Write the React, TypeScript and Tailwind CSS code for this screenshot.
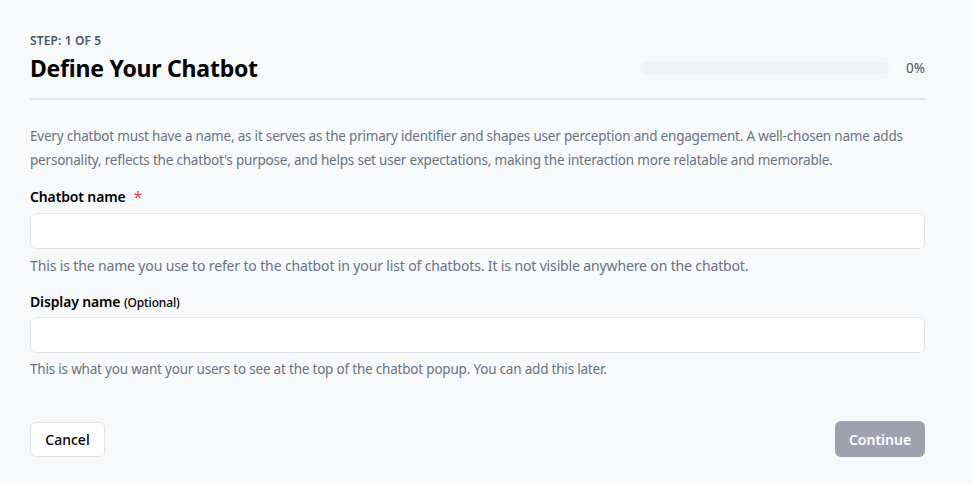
import React, { useState } from 'react';

export default function App() {
  const [name, setName] = useState('');
  const [displayName, setDisplayName] = useState('');
  const progress = 0;

  return (
    <div
      className="min-h-screen w-full bg-[#f8f9fb] text-black"
      style={{ fontFamily: '"Segoe UI", "Noto Sans", "Open Sans", sans-serif' }}
    >
      <div className="w-[895px] ml-[30px] pt-[33px] pb-[28px]">
        {/* Header */}
        <div className="flex items-end justify-between border-b-2 border-[#e5e7eb] pb-[14px]">
          <div>
            <p className="text-[12px] font-semibold text-[#4b5563] leading-4 tracking-[0.01em]">STEP: 1 OF 5</p>
            <h1 className="mt-[3px] text-[23px] font-bold leading-8 tracking-[-0.01em]">Define Your Chatbot</h1>
          </div>
          <div className="flex items-center gap-4 mb-[6px]">
            <div className="w-[249px] h-3 rounded-full bg-[#f0f2f6]">
              <div className="h-3 rounded-full bg-[#6366f1]" style={{ width: `${progress}%` }} />
            </div>
            <span className="text-[13.5px] text-[#4b5563]">{progress}%</span>
          </div>
        </div>

        <p className="mt-[24px] text-[13.5px] leading-6 text-[#6b7280] tracking-[-0.015em]">
          Every chatbot must have a name, as it serves as the primary identifier and shapes user perception and engagement. A well-chosen name adds personality, reflects the chatbot's purpose, and helps set user expectations, making the interaction more relatable and memorable.
        </p>

        {/* Chatbot name */}
        <div className="mt-[15px]">
          <label className="flex items-center text-[14px] font-semibold leading-5 tracking-[-0.01em]">
            Chatbot name <span className="ml-2 text-[#ef4444] text-[16px] font-normal">*</span>
          </label>
          <input
            value={name}
            onChange={(e) => setName(e.target.value)}
            className="mt-[6px] block w-full h-[36px] rounded-md border border-[#e5e7eb] bg-white px-3 text-sm outline-none"
          />
          <p className="mt-[7px] text-[14px] leading-5 text-[#6b7280] tracking-[-0.01em]">
            This is the name you use to refer to the chatbot in your list of chatbots. It is not visible anywhere on the chatbot.
          </p>
        </div>

        {/* Display name */}
        <div className="mt-[16px]">
          <label className="block text-[14px] font-semibold leading-5 tracking-[-0.01em]">
            Display name <span className="text-[12px] font-medium">(Optional)</span>
          </label>
          <input
            value={displayName}
            onChange={(e) => setDisplayName(e.target.value)}
            className="mt-[4px] block w-full h-[36px] rounded-md border border-[#e5e7eb] bg-white px-3 text-sm outline-none"
          />
          <p className="mt-[6px] text-[13.5px] leading-5 text-[#6b7280] tracking-[-0.015em]">
            This is what you want your users to see at the top of the chatbot popup. You can add this later.
          </p>
        </div>

        {/* Footer */}
        <div className="mt-[42px] flex items-center justify-between">
          <button className="h-[35px] w-[75px] rounded-md border border-[#e5e7eb] bg-white text-[14px] font-medium text-black">
            Cancel
          </button>
          <button
            disabled
            className="h-[36px] w-[90px] rounded-md bg-[#9fa1ae] text-[14px] font-semibold text-white"
          >
            Continue
          </button>
        </div>
      </div>
    </div>
  );
}
